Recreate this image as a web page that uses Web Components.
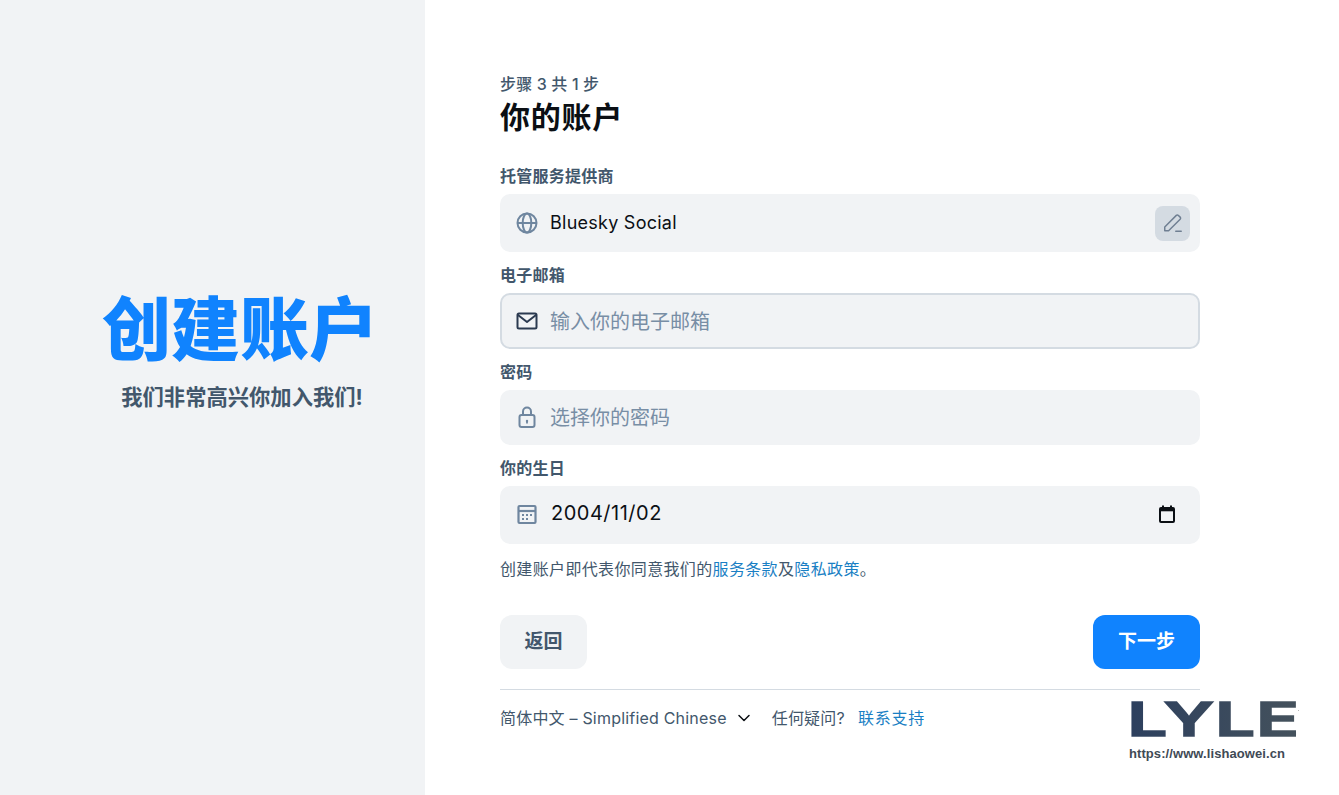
<!DOCTYPE html>
<html lang="zh-CN">
<head>
<meta charset="utf-8">
<title>创建账户</title>
<style>
html,body{margin:0;padding:0;height:100%;background:#fff;overflow:hidden}
body{font-family:Inter,"Noto Sans CJK SC",sans-serif;color:#0b0f14}
</style>
</head>
<body>
<signup-page>
  <intro-panel slot="intro" heading="创建账户"></intro-panel>

  <step-head step="步骤 3 共 1 步" title="你的账户"></step-head>

  <form-field label="托管服务提供商" height="58" tone="value">
    <svg slot="icon" viewBox="0 0 24 24" width="24" height="24" fill="none" stroke="#6f869f" stroke-width="2"><circle cx="12" cy="12" r="9.5"/><ellipse cx="12" cy="12" rx="4.3" ry="9.5"/><path d="M2.5 12h19"/></svg>
    Bluesky Social
    <span slot="end" class="edit"><svg viewBox="0 0 24 24" width="22" height="22" fill="none" stroke="#6f7f92" stroke-width="1.6" stroke-linejoin="round" stroke-linecap="round" style="display:block;margin:6.5px"><path d="M3 20.5v-4.2L15.6 3.7a1.6 1.6 0 0 1 2.3 0l1.9 1.9a1.6 1.6 0 0 1 0 2.3L7.2 20.5zM15 21h6"/></svg></span>
  </form-field>

  <form-field label="电子邮箱" height="55.5" tone="placeholder" focused>
    <svg slot="icon" viewBox="0 0 24 24" width="24" height="24" fill="none" stroke="#2b3a50" stroke-width="2" stroke-linejoin="round" stroke-linecap="round"><rect x="2.5" y="4.5" width="19" height="15" rx="1.5"/><path d="M3 6l9 7 9-7"/></svg>
    输入你的电子邮箱
  </form-field>

  <form-field label="密码" height="55" tone="placeholder">
    <svg slot="icon" viewBox="0 0 24 24" width="24" height="24" fill="none" stroke="#6f869f" stroke-width="2" stroke-linejoin="round"><rect x="4.5" y="10" width="15" height="12" rx="2"/><path d="M8 10V6.5a4 4 0 0 1 8 0V10"/><circle cx="12" cy="16" r="1.2" fill="#6f869f" stroke="none"/><path d="M12 16v2.5" stroke-width="1.8"/></svg>
    选择你的密码
  </form-field>

  <form-field label="你的生日" height="58.5" tone="date">
    <svg slot="icon" viewBox="0 0 24 24" width="24" height="24" fill="none" stroke="#6f869f" stroke-width="2.2" style="margin-top:-2px"><rect x="3.5" y="4" width="17" height="17" rx="1"/><path d="M3.5 9h17"/><g fill="#6f869f" stroke="none"><rect x="7" y="12" width="2" height="2"/><rect x="11" y="12" width="2" height="2"/><rect x="15" y="12" width="2" height="2"/><rect x="7" y="16" width="2" height="2"/><rect x="11" y="16" width="2" height="2"/></g></svg>
    2004/11/02
    <svg slot="end" viewBox="0 0 24 24" width="24" height="24" style="display:block;margin:-2px 11px 0 0" fill="none" stroke="#0b0f14" stroke-width="2"><rect x="5" y="6" width="14" height="14" rx="1"/><path d="M5 8h14" stroke-width="2.6"/><path d="M8 3.5v3M16 3.5v3"/></svg>
  </form-field>

  <legal-note>创建账户即代表你同意我们的<a>服务条款</a>及<a>隐私政策</a>。</legal-note>

  <nav-buttons>
    <action-button slot="back">返回</action-button>
    <action-button slot="next" primary>下一步</action-button>
  </nav-buttons>

  <page-footer></page-footer>
  <lyle-mark slot="mark"></lyle-mark>
</signup-page>

<script>
const CJK = 'Inter,"Noto Sans CJK SC",sans-serif';
function def(name, html, init){
  customElements.define(name, class extends HTMLElement{
    constructor(){super();const r=this.attachShadow({mode:'open'});r.innerHTML=typeof html==='function'?html(this):html;}
    connectedCallback(){ if(init) init(this); }
  });
}
def('signup-page',`<style>
:host{display:flex;height:795px;width:100%;position:relative;font-family:${CJK}}
.left{flex:0 0 425px;background:#f1f3f5;display:flex}
.main{flex:1;padding:74px 0 0 75px;box-sizing:border-box}
.col{width:700px;display:flex;flex-direction:column}
</style>
<div class="left"><slot name="intro"></slot></div>
<div class="main"><div class="col"><slot></slot></div></div>
<slot name="mark"></slot>`);

def('intro-panel',el=>`<style>
:host{flex:1;display:flex;flex-direction:column;align-items:center;padding:293px 0 0 55px;box-sizing:border-box}
h1{margin:0;font-size:69px;line-height:74px;font-weight:900;color:#1083fe;white-space:nowrap}
p{margin:17px 0 0 4px;font-size:21.3px;line-height:26px;font-weight:700;color:#42576c;white-space:nowrap}
</style>
<h1>${el.getAttribute('heading')}</h1>
<p>我们非常高兴你加入我们!</p>`);

def('step-head',el=>`<style>
:host{display:block;margin-bottom:29px}
.s{font-size:16px;line-height:20px;font-weight:500;color:#42576c;letter-spacing:.15px}
h2{margin:4px 0 0;font-size:30px;line-height:38px;font-weight:700;color:#0b0f14;letter-spacing:.75px}
</style>
<div class="s">${el.getAttribute('step')}</div>
<h2>${el.getAttribute('title')}</h2>`);

def('form-field',el=>{
  const h=el.getAttribute('height'), tone=el.getAttribute('tone'), f=el.hasAttribute('focused');
  const t={value:'font-size:18px;color:#0b0f14;letter-spacing:.25px',placeholder:'font-size:20px;color:#788ea5;padding-top:2px',date:'font-size:20px;color:#0b0f14;letter-spacing:.5px;margin-left:1px;padding-bottom:3px'}[tone];
  return `<style>
:host{display:block;margin-bottom:12px}
label{display:block;font-size:16px;line-height:22px;font-weight:700;color:#42576c;margin-bottom:7px;letter-spacing:.25px}
.box{height:${h}px;box-sizing:border-box;background:#f1f3f5;border-radius:10px;display:flex;align-items:center;padding:0 10px 0 15px;gap:11px;${f?'border:2px solid #d4dbe2;padding-left:13px;':''}}
.txt{flex:1;line-height:24px;${t};white-space:nowrap}
::slotted(svg[slot=icon]){display:block;flex:none}
</style>
<label>${el.getAttribute('label')}</label>
<div class="box"><slot name="icon"></slot><div class="txt"><slot></slot></div><slot name="end"></slot></div>`;
},el=>{
  const e=el.querySelector('.edit');
  if(e) e.style.cssText='display:block;width:35px;height:35px;background:#d4dbe2;border-radius:8px';
});

def('legal-note',`<style>
:host{display:block;font-size:16px;line-height:20px;color:#42576c;letter-spacing:.35px;margin-top:3px;white-space:nowrap}
::slotted(a){color:#1a7fc4}
</style><slot></slot>`);

def('nav-buttons',`<style>
:host{display:flex;justify-content:space-between;margin-top:36px;padding-bottom:20px;border-bottom:1px solid #d4dbe2}
</style><slot name="back"></slot><slot name="next"></slot>`);

def('action-button',el=>`<style>
:host{display:block}
button{border:0;height:54px;padding:0 ${el.hasAttribute('primary')?'25px':'24.5px'};border-radius:12px;font:700 19px/24px ${CJK};background:${el.hasAttribute('primary')?'#1083fe':'#f1f3f5'};color:${el.hasAttribute('primary')?'#fff':'#42576c'}}
</style><button><slot></slot></button>`);

def('page-footer',`<style>
:host{display:flex;align-items:center;margin-top:17px;font-size:16px;line-height:22px;color:#42576c;letter-spacing:.2px;white-space:nowrap}
svg{display:block;margin:0 21px 0 10px}
a{color:#1a7fc4;margin-left:13px;letter-spacing:.75px}
</style>
<span>简体中文 – Simplified Chinese</span>
<svg viewBox="0 0 14 14" width="14" height="14" fill="none" stroke="#0b0f14" stroke-width="1.5" stroke-linecap="round" stroke-linejoin="round"><path d="M2 4.5l5 5 5-5"/></svg>
<span>任何疑问?</span><a>联系支持</a>`);

def('lyle-mark',`<style>
:host{position:absolute;left:1129px;top:694px;display:block;width:170px}
.logo{font:600 46px/50px Inter,sans-serif;white-space:nowrap;width:max-content;letter-spacing:.8px;margin-left:-3px;transform-origin:0 0;transform:scaleX(1.53);padding:0 1px;color:transparent;-webkit-text-stroke:1.6px transparent;background:linear-gradient(90deg,#2c3f5e,#45525c);-webkit-background-clip:text;background-clip:text}
.url{font:700 13px/14px "Liberation Sans",sans-serif;color:#3f4a55;letter-spacing:.08px;margin-top:3px;white-space:nowrap}
i{position:absolute;left:169px;top:16px;width:1px;height:1px;background:#b5b5b5}
</style>
<div class="logo">LYLE</div>
<div class="url">https://www.lishaowei.cn</div><i></i>`);
</script>
</body>
</html>
